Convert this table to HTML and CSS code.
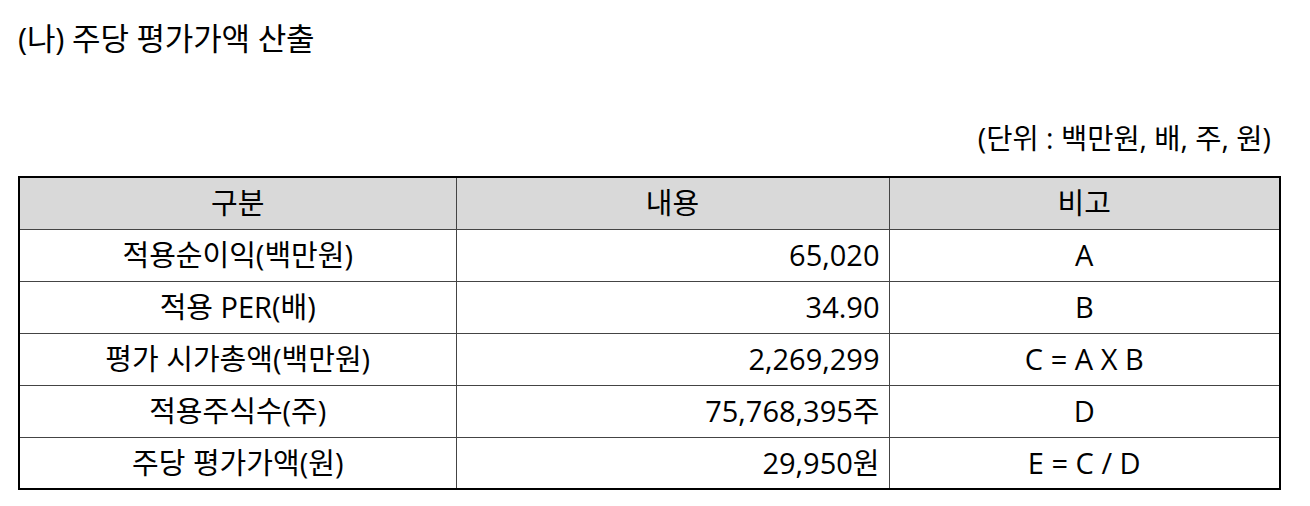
FILE: index.html
```html
<!DOCTYPE html>
<html lang="ko">
<head>
<meta charset="utf-8">
<link rel="stylesheet" href="styles.css">
</head>
<body>
<div class="page">
  <h2 class="title">(나) 주당 평가가액 산출</h2>
  <div class="unit">(단위 : 백만원, 배, 주, 원)</div>
  <table class="grid">
    <colgroup>
      <col class="c1"><col class="c2"><col class="c3">
    </colgroup>
    <thead>
      <tr><th>구분</th><th>내용</th><th>비고</th></tr>
    </thead>
    <tbody>
      <tr><td>적용순이익(백만원)</td><td class="num">65,020</td><td>A</td></tr>
      <tr><td>적용 PER(배)</td><td class="num">34.90</td><td>B</td></tr>
      <tr><td>평가 시가총액(백만원)</td><td class="num">2,269,299</td><td>C = A X B</td></tr>
      <tr><td>적용주식수(주)</td><td class="num">75,768,395주</td><td>D</td></tr>
      <tr><td>주당 평가가액(원)</td><td class="num">29,950원</td><td>E = C / D</td></tr>
    </tbody>
  </table>
</div>
</body>
</html>
```

FILE: styles.css
```css
html, body {
  margin: 0;
  padding: 0;
  background: #fff;
}
body {
  font-family: "Open Sans", "Noto Sans CJK KR", sans-serif;
  color: #000;
}
.page {
  padding: 22px 29px 0 18px;
}
.title {
  margin: 0;
  font-size: 31px;
  font-weight: normal;
  line-height: 32px;
  letter-spacing: -0.2px;
}
.unit {
  margin-top: 68px;
  text-align: right;
  font-size: 28.5px;
  line-height: 32px;
  padding-right: 10px;
}
.grid {
  margin-top: 22px;
  width: 1263px;
  border-collapse: collapse;
  border: 2px solid #000;
  table-layout: fixed;
  font-size: 29px;
  line-height: 32px;
}
.c1 { width: 437px; }
.c2 { width: 433px; }
.grid th, .grid td {
  border: 1px solid #444;
  height: 52px;
  padding: 0 9px;
  text-align: center;
  font-weight: normal;
  box-sizing: border-box;
}
.grid th {
  background: #d9d9d9;
}
.grid td.num {
  text-align: right;
}
```
